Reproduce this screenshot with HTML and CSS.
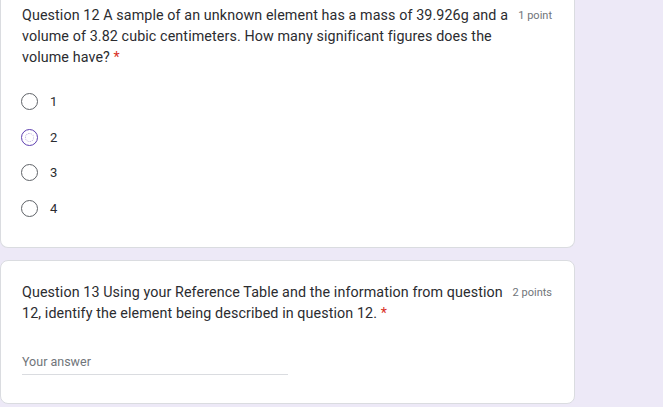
FILE: index.html
```html
<!DOCTYPE html>
<html>
<head>
<meta charset="utf-8">
<link rel="stylesheet" href="styles.css">
</head>
<body>
<div class="page">
  <div class="card card-first">
    <div class="q-head">
      <div class="q-text">Question 12 A sample of an unknown element has a mass of 39.926g and a volume of 3.82 cubic centimeters. How many significant figures does the volume have? <span class="req">*</span></div>
      <div class="q-points">1 point</div>
    </div>
    <div class="options">
      <div class="opt"><span class="radio"></span><span class="opt-label">1</span></div>
      <div class="opt"><span class="radio radio-focus"><span class="focus-ring"></span></span><span class="opt-label">2</span></div>
      <div class="opt"><span class="radio"></span><span class="opt-label">3</span></div>
      <div class="opt"><span class="radio"></span><span class="opt-label">4</span></div>
    </div>
  </div>
  <div class="card card-second">
    <div class="q-head">
      <div class="q-text">Question 13 Using your Reference Table and the information from question 12, identify the element being described in question 12. <span class="req">*</span></div>
      <div class="q-points">2 points</div>
    </div>
    <div class="answer">Your answer</div>
  </div>
</div>
</body>
</html>
```
FILE: styles.css
```css
html, body {
  margin: 0;
  padding: 0;
  background: #ede9f7;
  font-family: Roboto, "Liberation Sans", sans-serif;
  color: #2b2c30;
}
.page {
  width: 575px;
  display: flex;
  flex-direction: column;
  gap: 12px;
}
.card {
  background: #fff;
  border: 1px solid #dadce0;
  border-radius: 8px;
  padding: 0 22px 0 21px;
}
.card-first {
  border-top: none;
  border-top-left-radius: 0;
  border-top-right-radius: 0;
  padding-top: 5px;
  padding-bottom: 24px;
  height: 218px;
}
.card-second {
  padding-top: 21px;
  height: 121px;
}
.q-head {
  display: flex;
  align-items: flex-start;
  justify-content: space-between;
}
.q-text {
  width: 488px;
  font-size: 14.3px;
  line-height: 21px;
  letter-spacing: 0.1px;
}
.req { color: #d93025; }
.q-points {
  font-size: 11px;
  color: #70757a;
  line-height: 21px;
  white-space: nowrap;
}
.options {
  display: flex;
  flex-direction: column;
  margin-top: 16px;
}
.opt {
  display: flex;
  align-items: center;
  height: 35.6px;
}
.radio {
  width: 17px;
  height: 17px;
  border: 1.2px solid #5f6368;
  border-radius: 50%;
  box-sizing: border-box;
  margin-right: 12px;
  margin-left: -1px;
  position: relative;
}
.radio-focus {
  border-color: #5e3fb0;
}
.focus-ring {
  position: absolute;
  inset: 3px;
  border: 1px dotted #b9acdc;
  border-radius: 50%;
}
.opt-label {
  font-size: 13px;
}
.answer {
  margin-top: 30px;
  width: 266px;
  font-size: 12.5px;
  color: #70757a;
  padding-bottom: 5px;
  border-bottom: 1px solid #dadce0;
}
```
